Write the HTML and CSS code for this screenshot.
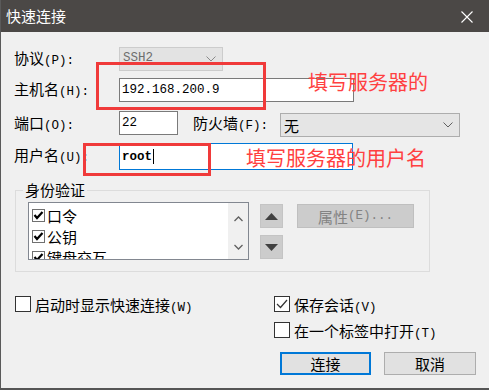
FILE: index.html
```html
<!DOCTYPE html>
<html lang="zh-CN">
<head>
<meta charset="utf-8">
<title>快速连接</title>
<link rel="stylesheet" href="styles.css">
</head>
<body>
<div class="window">
  <div class="titlebar">
    <span class="title">快速连接</span>
    <svg class="close" width="12" height="12" viewBox="0 0 12 12"><path d="M0.5 0.5 L11.5 11.5 M11.5 0.5 L0.5 11.5" stroke="#fff" stroke-width="1.1" fill="none"/></svg>
  </div>
  <div class="content">
    <div class="row r1">
      <span class="lbl">协议<span class="k">(P):</span></span>
      <div class="select sel-proto"><span class="val k">SSH2</span><svg class="chev" width="10" height="6" viewBox="0 0 10 6"><path d="M0.5 0.5 L5 5 L9.5 0.5" stroke="#8a8a8a" fill="none"/></svg></div>
    </div>
    <div class="row r2">
      <span class="lbl">主机名<span class="k">(H):</span></span>
      <div class="input host"><span class="k">192.168.200.9</span></div>
    </div>
    <div class="row r3">
      <span class="lbl">端口<span class="k">(O):</span></span>
      <div class="input port"><span class="k">22</span></div>
      <span class="lbl fw">防火墙<span class="k">(F):</span></span>
      <div class="select sel-fw"><span class="val">无</span><svg class="chev" width="10" height="6" viewBox="0 0 10 6"><path d="M0.5 0.5 L5 5 L9.5 0.5" stroke="#606060" fill="none"/></svg></div>
    </div>
    <div class="row r4">
      <span class="lbl">用户名<span class="k">(U):</span></span>
      <div class="input user"><span class="k bold">root</span><span class="caret"></span></div>
    </div>
    <fieldset class="group">
      <legend>身份验证</legend>
      <div class="gbody">
        <div class="list">
          <div class="items">
            <div class="item"><svg class="lcb" width="13" height="13" viewBox="0 0 13 13"><rect x="0.5" y="0.5" width="12" height="12" fill="#fff" stroke="#707070"/><path d="M2.5 6 L5 9 L10.5 3" stroke="#000" stroke-width="2.2" fill="none"/></svg><span>口令</span></div>
            <div class="item"><svg class="lcb" width="13" height="13" viewBox="0 0 13 13"><rect x="0.5" y="0.5" width="12" height="12" fill="#fff" stroke="#707070"/><path d="M2.5 6 L5 9 L10.5 3" stroke="#000" stroke-width="2.2" fill="none"/></svg><span>公钥</span></div>
            <div class="item"><svg class="lcb" width="13" height="13" viewBox="0 0 13 13"><rect x="0.5" y="0.5" width="12" height="12" fill="#fff" stroke="#707070"/><path d="M2.5 6 L5 9 L10.5 3" stroke="#000" stroke-width="2.2" fill="none"/></svg><span>键盘交互</span></div>
          </div>
          <div class="scroll">
            <svg width="9" height="6" viewBox="0 0 9 6"><path d="M0.5 5 L4.5 1 L8.5 5" stroke="#606060" stroke-width="1.3" fill="none"/></svg>
            <svg width="9" height="6" viewBox="0 0 9 6"><path d="M0.5 1 L4.5 5 L8.5 1" stroke="#606060" stroke-width="1.3" fill="none"/></svg>
          </div>
        </div>
        <div class="updown">
          <div class="ud"><svg width="13" height="7" viewBox="0 0 13 7"><path d="M0 7 L6.5 0 L13 7 Z" fill="#404040"/></svg></div>
          <div class="ud"><svg width="13" height="7" viewBox="0 0 13 7"><path d="M0 0 L6.5 7 L13 0 Z" fill="#404040"/></svg></div>
        </div>
        <div class="prop">属性<span class="k">(E)...</span></div>
      </div>
    </fieldset>
    <div class="bottom">
      <div class="bleft">
        <div class="cb"><span class="box"></span><span>启动时显示快速连接<span class="k">(W)</span></span></div>
      </div>
      <div class="bright">
        <div class="cb"><span class="box"><svg width="14" height="14" viewBox="0 0 14 14"><path d="M2 7 L5.5 10.5 L12 3" stroke="#333" stroke-width="1.2" fill="none"/></svg></span><span>保存会话<span class="k">(V)</span></span></div>
        <div class="cb cb2"><span class="box"></span><span>在一个标签中打开<span class="k">(T)</span></span></div>
        <div class="buttons">
          <div class="btn primary">连接</div>
          <div class="btn cancel">取消</div>
        </div>
      </div>
    </div>
  </div>
  <div class="anno-box box1"></div>
  <div class="anno-box box2"></div>
  <div class="anno-text t1">填写服务器的</div>
  <div class="anno-text t2">填写服务器的用户名</div>
</div>
</body>
</html>
```

FILE: styles.css
```css
html, body {
  margin: 0;
  padding: 0;
  background: #f0f0f0;
}
body {
  font-family: "Noto Sans CJK SC", "Noto Sans", sans-serif;
  font-size: 15px;
  color: #000;
}
.window {
  position: relative;
  width: 489px;
  height: 390px;
  box-sizing: border-box;
  border-left: 1px solid #5a5a5a;
  border-bottom: 2px solid #555;
  background: #f0f0f0;
  overflow: hidden;
}
.titlebar {
  height: 32px;
  background: #4b4846;
  display: flex;
  align-items: center;
  justify-content: space-between;
  padding: 0 16px 0 5px;
}
.title {
  color: #fff;
  font-size: 15px;
  line-height: 32px;
}
.close {
  display: block;
  margin-top: 1px;
}
.content {
  padding: 15px 0 0 13px;
}
.k {
  font-family: "Liberation Mono", "DejaVu Sans Mono", monospace;
  font-size: 12.5px;
}
.bold {
  font-weight: bold;
}
.row {
  display: flex;
  align-items: center;
  height: 24px;
}
.r1 { margin-bottom: 7px; }
.r2 { margin-bottom: 9px; }
.r3 { margin-bottom: 6px; align-items: flex-start; height: 26px; }
.r3 .lbl { line-height: 24px; }
.r4 { height: 27px; }
.lbl {
  width: 105px;
  flex: none;
  white-space: nowrap;
  line-height: 24px;
}
.lbl.fw {
  width: 87px;
  margin-left: 15px;
}
.input {
  box-sizing: border-box;
  height: 24px;
  background: #fff;
  border: 1px solid #7a7a7a;
  display: flex;
  align-items: center;
  padding-left: 2px;
}
.host { width: 235px; }
.port { width: 59px; }
.user {
  width: 234px;
  height: 27px;
  border-color: #0078d7;
}
.caret {
  display: inline-block;
  width: 1px;
  height: 15px;
  background: #000;
  margin-left: 1px;
}
.select {
  box-sizing: border-box;
  height: 24px;
  display: flex;
  align-items: center;
  justify-content: space-between;
  padding: 0 6px 0 3px;
}
.sel-proto {
  width: 104px;
  background: #e3e3e3;
  border: 1px solid #cccccc;
  color: #6d6d6d;
}
.sel-proto .val {
  margin-top: -3px;
}
.sel-fw {
  width: 180px;
  margin-top: 2px;
  background: #e5e5e5;
  border: 1px solid #adadad;
}
.chev { display: block; }
.group {
  margin: 10px 0 0 1px;
  width: 415px;
  box-sizing: border-box;
  border: 1px solid #dcdcdc;
  padding: 2px 0 11px 12px;
  min-width: 0;
}
.group legend {
  margin-left: -5px;
  padding: 0 2px;
  line-height: 20px;
  font-size: 15px;
}
.gbody {
  display: flex;
  align-items: flex-start;
}
.list {
  box-sizing: border-box;
  width: 221px;
  height: 58px;
  border: 1px solid #828790;
  background: #fff;
  display: flex;
}
.items {
  flex: 1;
  padding-top: 2px;
  overflow: hidden;
}
.item {
  height: 21px;
  display: flex;
  align-items: center;
  padding-left: 3px;
  white-space: nowrap;
}
.item span {
  margin-left: 2px;
  line-height: 21px;
}
.lcb { display: block; flex: none; }
.scroll {
  width: 20px;
  background: #f0f0f0;
  display: flex;
  flex-direction: column;
  align-items: center;
  justify-content: space-between;
  padding: 13px 0 9px;
  box-sizing: border-box;
}
.scroll svg { display: block; }
.updown {
  margin: 2px 0 0 11px;
  display: flex;
  flex-direction: column;
  gap: 7px;
}
.ud {
  width: 23px;
  height: 24px;
  box-sizing: border-box;
  background: #cccccc;
  border: 1px solid #c4c4c4;
  display: flex;
  align-items: center;
  justify-content: center;
}
.ud svg { display: block; }
.prop {
  margin: 2px 0 0 14px;
  width: 117px;
  height: 24px;
  box-sizing: border-box;
  background: #cccccc;
  border: 1px solid #bfbfbf;
  color: #838383;
  display: flex;
  align-items: center;
  justify-content: center;
}
.bottom {
  display: flex;
  margin-top: 24px;
}
.bleft {
  width: 260px;
  padding-left: 1px;
  box-sizing: border-box;
}
.cb {
  display: flex;
  align-items: center;
  height: 16px;
  white-space: nowrap;
}
.cb .box {
  box-sizing: border-box;
  width: 16px;
  height: 16px;
  border: 1px solid #333;
  background: #fff;
  margin-right: 4px;
  display: flex;
  align-items: center;
  justify-content: center;
  flex: none;
}
.cb .box svg { display: block; }
.cb2 { margin-top: 10px; }
.buttons {
  display: flex;
  margin: 14px 0 0 6px;
}
.btn {
  box-sizing: border-box;
  height: 23px;
  background: #e1e1e1;
  display: flex;
  align-items: center;
  justify-content: center;
}
.primary {
  width: 91px;
  border: 2px solid #0078d7;
}
.cancel {
  width: 92px;
  margin-left: 13px;
  border: 1px solid #adadad;
}
.anno-box {
  position: absolute;
  box-sizing: border-box;
  border: 3px solid #f03a3a;
}
.box1 { left: 95px; top: 62px; width: 170px; height: 48px; }
.box2 { left: 82px; top: 143px; width: 128px; height: 33px; }
.anno-text {
  position: absolute;
  font-size: 20px;
  line-height: 20px;
  color: #ff4040;
  white-space: nowrap;
}
.t1 { left: 307px; top: 72px; }
.t2 { left: 245px; top: 148px; }
```
